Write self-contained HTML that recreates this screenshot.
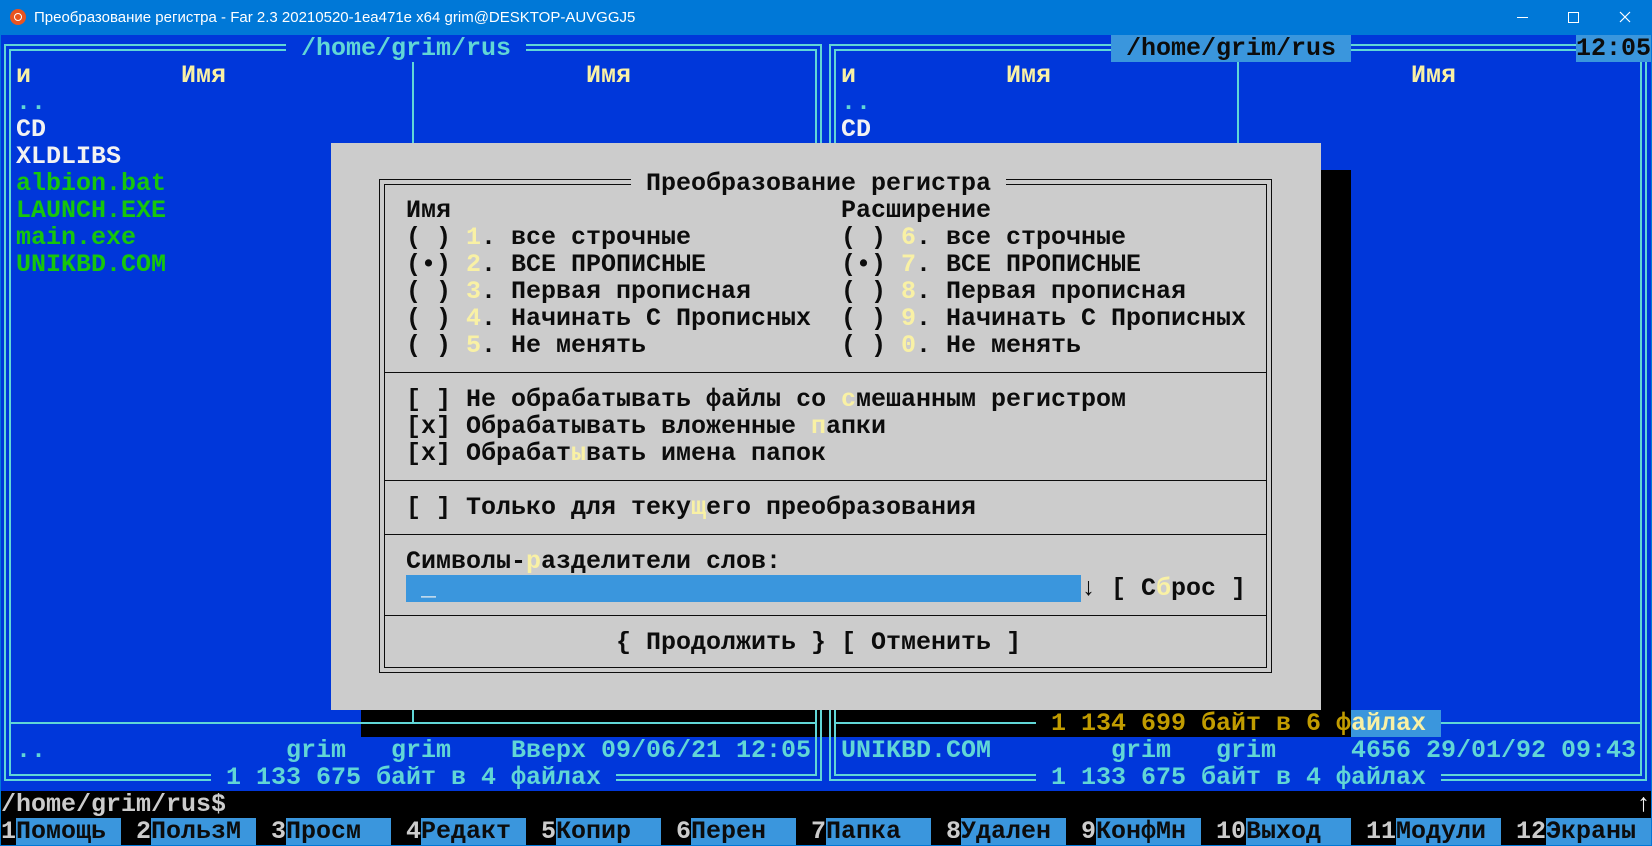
<!DOCTYPE html>
<html><head><meta charset="utf-8">
<style>
html,body{margin:0;padding:0;}
body{width:1652px;height:846px;overflow:hidden;background:#0078d7;position:relative;}
#s{position:absolute;left:0;top:0;width:1652px;height:846px;}
.t{font-family:"Liberation Mono","DejaVu Sans Mono",monospace;font-size:25px;line-height:27px;white-space:pre;overflow:hidden;font-weight:bold;}
#tb{position:absolute;left:0;top:0;width:1652px;height:35px;background:#0078d7;color:#fff;font-family:"Liberation Sans","DejaVu Sans",sans-serif;font-size:15px;}
</style></head><body>
<div id="tb">
  <div style="position:absolute;left:10px;top:9px;width:16px;height:16px;border-radius:50%;background:#e95420;"></div>
  <div style="position:absolute;left:14px;top:13px;width:6px;height:6px;border-radius:50%;border:1.5px solid #fff;"></div>
  <div style="position:absolute;left:34px;top:9px;white-space:pre;">Преобразование регистра - Far 2.3 20210520-1ea471e x64 grim@DESKTOP-AUVGGJ5</div>
  <div style="position:absolute;left:1517px;top:17px;width:11px;height:1px;background:#fff;"></div>
  <div style="position:absolute;left:1568px;top:12px;width:9px;height:9px;border:1px solid #fff;"></div>
  <svg style="position:absolute;left:1619px;top:11px" width="12" height="12"><path d="M1 1L11 11M11 1L1 11" stroke="#fff" stroke-width="1.2"/></svg>
</div>
<div id="s"></div>
<script>
const S=document.getElementById('s');
const CW=15,RH=27,X0=1,Y0=35;
function box(x,y,w,h,st){const d=document.createElement('div');d.style.cssText='position:absolute;left:'+x+'px;top:'+y+'px;width:'+w+'px;height:'+h+'px;'+(st||'');S.appendChild(d);return d;}
function rect(c,r,w,h,bg,z){return box(X0+c*CW,Y0+r*RH,w*CW,h*RH,'background:'+bg+';z-index:'+(z||0));}
function t(c,r,s,fg,bg,z){const d=rect(c,r,[...s].length,1,bg||'transparent',z||3);d.style.color=fg;d.textContent=s;d.className='t';return d;}
function xc(c){return X0+c*CW+7;}
function yc(r){return Y0+r*RH+13;}
function dbox(c1,r1,c2,r2,col,z,w){w=w||2;
 box(xc(c1)-4,yc(r1)-4,xc(c2)-xc(c1)+8,yc(r2)-yc(r1)+8,'border:'+w+'px solid '+col+';box-sizing:border-box;z-index:'+z);
 box(xc(c1)+1,yc(r1)+1,xc(c2)-xc(c1)-2,yc(r2)-yc(r1)-2,'border:'+w+'px solid '+col+';box-sizing:border-box;z-index:'+z);}
function sep(c1,c2,r,col,z,w){w=w||2;box(xc(c1)+1,yc(r)-Math.floor(w/2),xc(c2)-xc(c1)-2,w,'background:'+col+';z-index:'+z);}
function vl(c,r1,r2,col,z){box(xc(c)-1,yc(r1)+1,2,yc(r2)-yc(r1)-1,'background:'+col+';z-index:'+z);}

const BL='#0037da',CY='#61d6d6',YL='#f9f1a5',WH='#f2f2f2',GR='#16c60c',AQ='#3a96dd',BK='#0c0c0c',GY='#cccccc',DY='#c19c00';
rect(0,0,110,28,BL,0);
rect(88,5,2,20,'#000',1);
rect(24,25,66,1,'#000',1);
dbox(0,0,54,27,CY,2);
dbox(55,0,109,27,CY,2);
sep(0,54,25,CY,2);sep(55,109,25,CY,2);
vl(27,0,25,CY,2);vl(82,0,25,CY,2);
t(19,0,' /home/grim/rus ',CY,BL);
t(74,0,' /home/grim/rus ',BK,AQ);
t(105,0,'12:05',BK,AQ);
t(1,1,'и',YL);t(12,1,'Имя',YL);t(39,1,'Имя',YL);
t(56,1,'и',YL);t(67,1,'Имя',YL);t(94,1,'Имя',YL);
t(1,2,'..',CY);t(1,3,'CD',WH);t(1,4,'XLDLIBS',WH);
t(1,5,'albion.bat',GR);t(1,6,'LAUNCH.EXE',GR);t(1,7,'main.exe',GR);t(1,8,'UNIKBD.COM',GR);
t(56,2,'..',CY);t(56,3,'CD',WH);
t(69,25,' 1 134 699 байт в 6 ',DY,'#000');
t(89,25,'ф',DY,'#000');
t(90,25,'айлах ',YL,AQ);
t(1,26,'..',CY);t(19,26,'grim',CY);t(26,26,'grim',CY);t(34,26,'Вверх 09/06/21 12:05',CY);
t(56,26,'UNIKBD.COM',CY);t(74,26,'grim',CY);t(81,26,'grim',CY);t(90,26,'4656 29/01/92 09:43',CY);
t(14,27,' 1 133 675 байт в 4 файлах ',CY,BL);
t(69,27,' 1 133 675 байт в 4 файлах ',CY,BL);
rect(0,28,110,2,'#000',0);
t(0,28,'/home/grim/rus$',GY);
t(109,28,'↑',WH);
const keys=['Помощь','ПользМ','Просм','Редакт','Копир','Перен','Папка','Удален','КонфМн','Выход','Модули','Экраны'];
for(let i=0;i<12;i++){
 let nc,lc,n=String(i+1);
 if(i<9){nc=9*i;lc=nc+1;}else{nc=81+10*(i-9);lc=nc+2;}
 t(nc,29,n,GY,'#000');
 t(lc,29,(keys[i]+'       ').slice(0,7),BK,AQ);
}
rect(22,4,66,21,GY,5);
dbox(25,5,84,23,BK,6,1);
[12,16,18,21].forEach(r=>sep(25,84,r,BK,6,1));
function dt(c,r,parts){let x=c;parts.forEach(p=>{const s=typeof p==='string'?p:p[0];const hot=typeof p!=='string';t(x,r,s,hot?YL:BK,'transparent',7);x+=[...s].length;});}
t(42,5,' Преобразование регистра ',BK,GY,7);
dt(27,6,['Имя']);dt(56,6,['Расширение']);
const L=[['1','. все строчные'],['2','. ВСЕ ПРОПИСНЫЕ'],['3','. Первая прописная'],['4','. Начинать С Прописных'],['5','. Не менять']];
const R=[['6','. все строчные'],['7','. ВСЕ ПРОПИСНЫЕ'],['8','. Первая прописная'],['9','. Начинать С Прописных'],['0','. Не менять']];
for(let i=0;i<5;i++){
 const rb=i==1?'(•) ':'( ) ';
 dt(27,7+i,[rb,[L[i][0]],L[i][1]]);
 dt(56,7+i,[rb,[R[i][0]],R[i][1]]);
}
dt(27,13,['[ ] Не обрабатывать файлы со ',['с'],'мешанным регистром']);
dt(27,14,['[x] Обрабатывать вложенные ',['п'],'апки']);
dt(27,15,['[x] Обрабат',['ы'],'вать имена папок']);
dt(27,17,['[ ] Только для теку',['щ'],'его преобразования']);
dt(27,19,['Символы-',['р'],'азделители слов:']);
rect(27,20,45,1,AQ,6);
t(28,20,'_',WH,'transparent',7);
dt(72,20,['↓']);
dt(74,20,['[ С',['б'],'рос ]']);
dt(41,22,['{ Продолжить } [ Отменить ]']);
</script>
</body></html>
